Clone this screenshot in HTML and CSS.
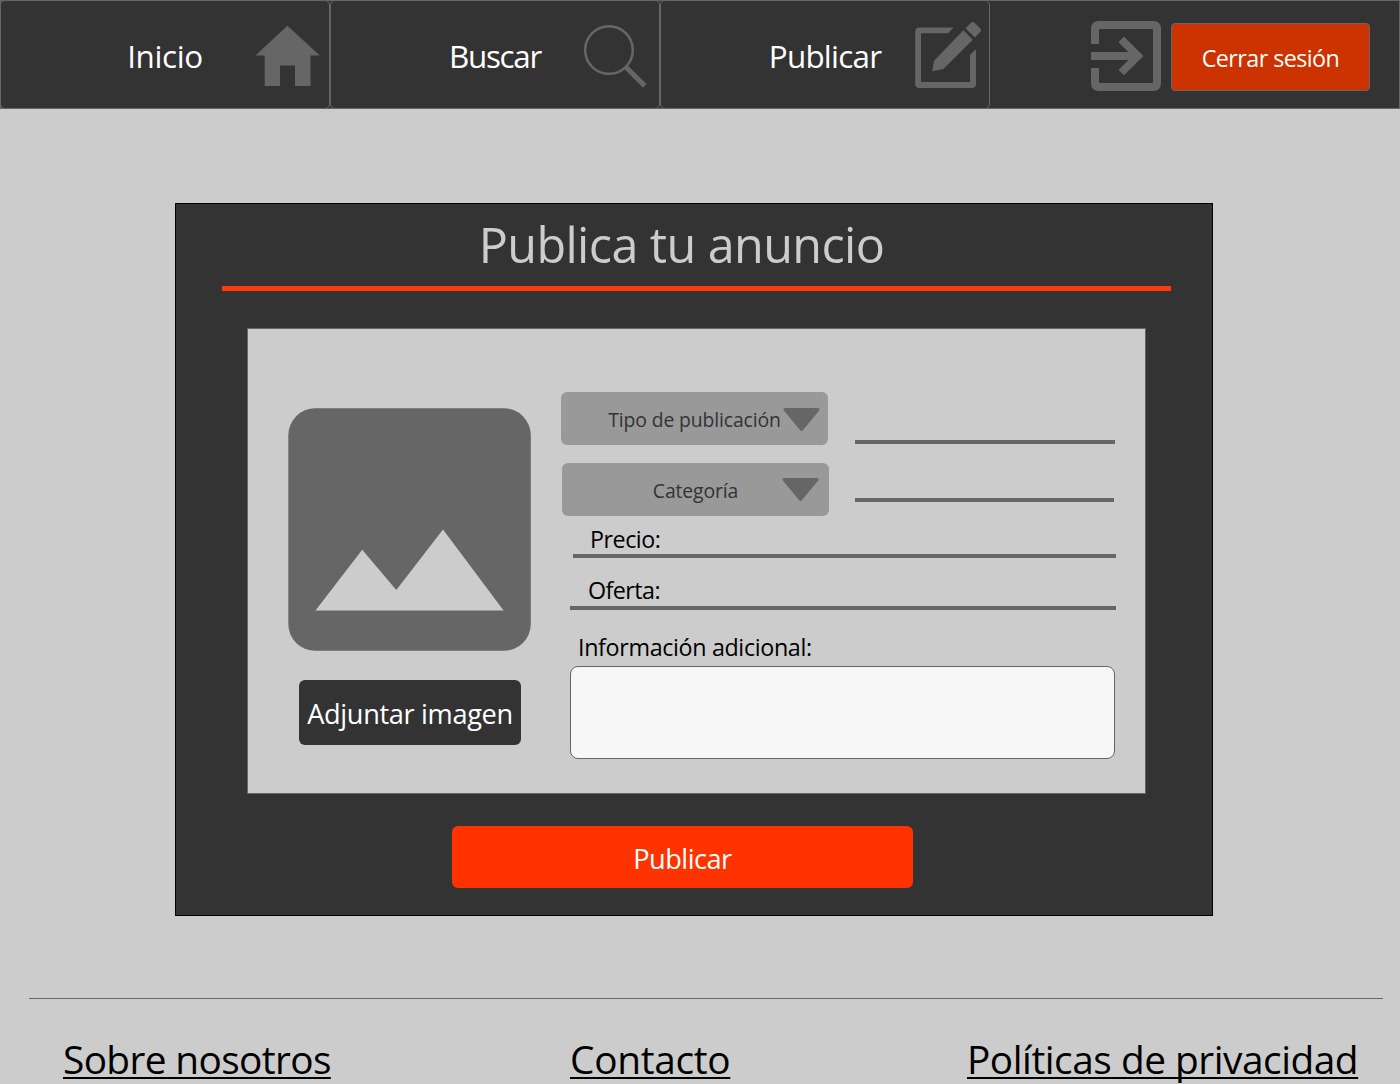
FILE: index.html
```html
<!DOCTYPE html>
<html lang="es">
<head>
<meta charset="utf-8">
<title>Publica tu anuncio</title>
<link rel="stylesheet" href="styles.css">
</head>
<body>
<header class="topbar">
  <nav class="nav">
    <a class="nav-item"><span class="nav-label nav-label-home">Inicio</span>
      <svg class="nav-icon" viewBox="250 1 79 107"><path d="M287.5 25.7 319.7 55.5H310.5V86H295V65.5H280V86H264.7V55.5H255.4Z"/></svg></a>
    <a class="nav-item"><span class="nav-label nav-label-search">Buscar</span>
      <svg class="nav-icon" viewBox="580 1 79 107"><circle cx="609" cy="50" r="23.8" fill="none" stroke="#666" stroke-width="2.5"/><path d="M625.5 66.8 644.8 85.9" stroke="#666" stroke-width="5"/></svg></a>
    <a class="nav-item"><span class="nav-label nav-label-post">Publicar</span>
      <svg class="nav-icon" viewBox="910 1 79 107"><path d="M953.5 27.4H919.5Q915.2 27.4 915.2 31.7V83.7Q915.2 88 919.5 88H971.7Q976 88 976 83.7V49.3L970 54.9V82H921V33.2H948.2Z"/><path d="M963.4 30.3 972.8 39.7 943.4 69 932.2 71.2 934 60.8Z"/><path d="M965.5 28.3 971 22.8Q972.8 21.2 974.6 22.8L980.3 28.5Q982 30.3 980.3 32.1L974.8 37.4Z"/></svg></a>
  </nav>
  <div class="session">
    <svg class="exit-icon" viewBox="1091 21 70 70"><path d="M1099 21H1153Q1161 21 1161 29V83Q1161 91 1153 91H1099Q1091 91 1091 83V68H1099V83H1153V29H1099V44H1091V29Q1091 21 1099 21Z"/><path d="M1091 52H1128.4L1118.5 42.2 1123.9 36.5 1143.5 56 1123.9 75.3 1118.5 69.9 1128.4 60H1091Z"/></svg>
    <button class="logout">Cerrar sesión</button>
  </div>
</header>

<main class="card">
  <h1 class="title">Publica tu anuncio</h1>
  <div class="rule"></div>
  <form class="panel">
    <section class="media">
      <svg class="picture" viewBox="288 408 243 243"><rect x="288.3" y="408.3" width="242.5" height="242.5" rx="27" fill="#666"/><path d="M315.5 610.5 362.2 549.8 396.3 590 443 529.5 503.6 610.5Z" fill="#ccc"/></svg>
      <button type="button" class="attach">Adjuntar imagen</button>
    </section>
    <section class="fields">
      <div class="row">
        <div class="select"><span>Tipo de publicación</span><svg class="arrow" viewBox="0 0 37 23"><path d="M2 1.5H35L18.5 21.5Z"/></svg></div>
        <div class="line"></div>
      </div>
      <div class="row row-category">
        <div class="select"><span>Categoría</span><svg class="arrow" viewBox="0 0 37 23"><path d="M2 1.5H35L18.5 21.5Z"/></svg></div>
        <div class="line"></div>
      </div>
      <label class="field price">Precio:</label>
      <label class="field offer">Oferta:</label>
      <label class="info-label" for="info">Información adicional:</label>
      <textarea class="info" id="info"></textarea>
    </section>
  </form>
  <button class="submit">Publicar</button>
</main>

<footer class="footer">
  <a class="about">Sobre nosotros</a>
  <a class="contact">Contacto</a>
  <a class="privacy">Políticas de privacidad</a>
</footer>
</body>
</html>
```
FILE: styles.css
```css
* { box-sizing: border-box; }

body {
  margin: 0;
  height: 1084px;
  overflow: hidden;
  background: #ccc;
  color: #000;
  font-family: "Open Sans", "Noto Sans", sans-serif;
}

button { font-family: inherit; border: 0; padding: 0; color: #fff; }
svg { display: block; }

/* Top bar */
.topbar {
  display: flex;
  justify-content: space-between;
  height: 109px;
  background: #333;
  box-shadow: inset 0 0 0 1px #666;
}
.nav { display: flex; }
.nav-item {
  display: grid;
  grid-template-columns: 1fr auto 1fr;
  align-items: center;
  width: 330px;
  height: 109px;
  border: 1px solid #666;
  border-radius: 5px;
  color: #fff;
  font-size: 31.4px;
}
.nav-label { grid-column: 2; padding-top: 3px; line-height: 44px; }
.nav-label-home { letter-spacing: -0.37px; }
.nav-label-search { letter-spacing: -1.3px; }
.nav-label-post { letter-spacing: -0.75px; }
.nav-icon { justify-self: end; width: 79px; height: 107px; fill: #666; }

.session { display: flex; align-items: flex-start; padding: 21px 30px 0 0; }
.exit-icon { width: 70px; height: 70px; margin-right: 10px; fill: #666; }
.logout {
  width: 199px;
  height: 68px;
  margin-top: 2px;
  padding-top: 2px;
  border: 1px solid #666;
  border-radius: 4px;
  background: #c30;
  font-size: 23.3px;
  letter-spacing: -0.56px;
}

/* Card */
.card {
  width: 1038px;
  height: 713px;
  margin: 94px 0 0 175px;
  border: 1px solid #000;
  background: #333;
}
.title {
  margin: 0 0 2px;
  padding-right: 25px;
  color: #ccc;
  font-size: 48.5px;
  font-weight: 400;
  line-height: 80px;
  letter-spacing: -0.59px;
  text-align: center;
}
.rule { width: 949px; height: 5px; margin-left: 46px; background: #ff3a08; }
.panel {
  display: flex;
  width: 899px;
  height: 466px;
  margin: 37px 0 0 71px;
  border: 1px solid #666;
  background: #ccc;
}
.submit {
  display: block;
  width: 461px;
  height: 62px;
  margin: 32px 0 0 276px;
  padding-top: 3px;
  border-radius: 6px;
  background: #f30;
  font-size: 27.2px;
  letter-spacing: -0.53px;
}

/* Image column */
.media { width: 243px; margin: 79px 30px 0 40px; }
.picture { width: 243px; height: 243px; }
.attach {
  width: 222px;
  height: 65px;
  margin: 29px 0 0 11px;
  padding-top: 1px;
  border-radius: 6px;
  background: #333;
  font-size: 27.2px;
  letter-spacing: -0.35px;
}

/* Form column */
.fields { display: flex; flex-direction: column; width: 555px; padding-top: 63px; font-size: 23.3px; }
.row { display: flex; width: 554px; height: 53px; }
.row-category { width: 553px; margin-top: 18px; padding-left: 1px; }
.select {
  display: grid;
  grid-template-columns: 1fr auto 1fr;
  align-items: start;
  width: 267px;
  border-radius: 6px;
  background: #999;
  color: #333;
  font-size: 19.4px;
  line-height: 55px;
  letter-spacing: -0.14px;
}
.select span { grid-column: 2; }
.arrow {
  justify-self: end;
  width: 37px;
  height: 23px;
  margin: 16px 8px 0 0;
  fill: #666;
  stroke: #666;
  stroke-width: 3;
  stroke-linejoin: round;
}
.row-category .arrow { margin: 15px 10px 0 0; }
.line { flex: 1; height: 4px; margin: 48px 0 0 27px; background: #666; }
.row-category .line { margin: 35px 0 0 26px; }
.field { border-bottom: 4px solid #666; line-height: 30px; }
.price { height: 42px; margin-left: 12px; padding: 8px 0 0 17px; letter-spacing: -0.48px; }
.offer { height: 52px; margin-left: 9px; padding: 17px 0 0 18px; letter-spacing: -0.57px; }
.info-label { height: 56px; padding: 22px 0 0 17px; line-height: 30px; letter-spacing: -0.35px; }
.info {
  width: 545px;
  height: 93px;
  margin-left: 9px;
  border: 1px solid #666;
  border-radius: 8px;
  background: #f7f7f7;
  resize: none;
}

/* Footer */
.footer {
  display: grid;
  grid-template-columns: 507px 397px auto;
  width: 1354px;
  height: 86px;
  margin: 82px 0 0 29px;
  padding: 35px 0 0 34px;
  border-top: 1px solid #666;
  font-size: 38.8px;
  line-height: 50px;
  white-space: nowrap;
}
.footer a {
  justify-self: start;
  text-decoration: underline 2px;
  text-underline-offset: 3px;
  text-decoration-skip-ink: none;
}
.about { letter-spacing: -0.62px; }
.contact { letter-spacing: -0.3px; }
.privacy { letter-spacing: -0.47px; }
```
